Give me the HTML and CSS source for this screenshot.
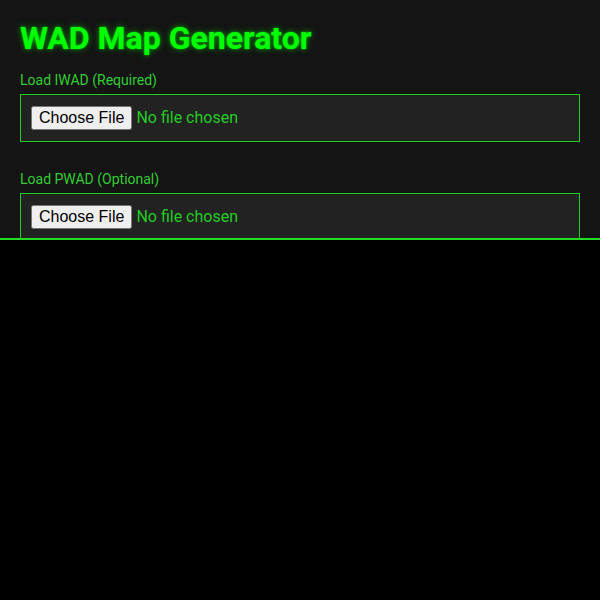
FILE: index.html
```html
<!DOCTYPE html>
<html lang="en">
<head>
<meta charset="utf-8">
<title>WAD Map Generator</title>
<link rel="stylesheet" href="styles.css">
</head>
<body>
<div class="panel">
  <h1 class="title">WAD Map Generator</h1>
  <div class="field">
    <label class="field-label" for="iwad">Load IWAD (Required)</label>
    <div class="file-box"><input id="iwad" class="file-input" type="file"></div>
  </div>
  <div class="field">
    <label class="field-label" for="pwad">Load PWAD (Optional)</label>
    <div class="file-box"><input id="pwad" class="file-input" type="file"></div>
  </div>
</div>
</body>
</html>
```
FILE: styles.css
```css
html, body {
  margin: 0;
  background: #000;
}

body {
  font-family: Roboto, "Liberation Sans", sans-serif;
}

/* top control panel, clipped with a glowing green rule underneath */
.panel {
  box-sizing: border-box;
  height: 240px;
  padding: 20px 20px 0;
  background: #141414;
  border-bottom: 2px solid #22dd22;
  overflow: hidden;
}

.title {
  margin: 0 0 15px;
  font-size: 32px;
  font-weight: 700;
  line-height: 37px;
  color: #00ff00;
  text-shadow: 0 0 6px rgba(0, 255, 0, 0.55), 0 0 2px rgba(0, 255, 0, 0.6);
}

.field {
  margin-bottom: 29px;
}

.field-label {
  display: block;
  margin-bottom: 5px;
  font-size: 14px;
  line-height: 17px;
  color: #33cc33;
}

.file-box {
  padding: 11px 10px;
  background: #222;
  border: 1px solid #22cc22;
}

.file-input {
  display: block;
  font-family: Roboto, "Liberation Sans", sans-serif;
  font-size: 16px;
  color: #22cc22;
}
```
